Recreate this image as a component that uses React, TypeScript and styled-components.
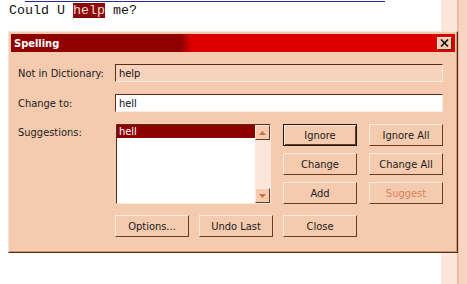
import styled, { createGlobalStyle } from "styled-components";

const GlobalStyle = createGlobalStyle`
  html, body {
    margin: 0;
    padding: 0;
    background: #fff;
  }
`;

const uiFont = `"DejaVu Sans Condensed", "Liberation Sans", sans-serif`;

const Page = styled.div`
  width: 467px;
  height: 284px;
  overflow: hidden;
  padding-top: 1px;
  box-sizing: border-box;
  background: linear-gradient(
    to right,
    #fff 0,
    #fff 441px,
    #fce6db 441px,
    #fce6db 457px,
    #e8bca4 457px,
    #e8bca4 459px,
    #f8d3bf 459px
  );
`;

const DocRule = styled.div`
  margin-left: 25px;
  width: 360px;
  height: 1px;
  background: #2a2aa8;
`;

const DocText = styled.div`
  margin: 2px 0 0 9px;
  font-family: "Liberation Mono", monospace;
  font-size: 13.33px;
  line-height: 14px;
  color: #111;
`;

const Marked = styled.span`
  background: #8c0a0a;
  color: #f4dcd0;
`;

const Dialog = styled.div`
  margin: 13px 0 0 8px;
  width: 450px;
  height: 222px;
  box-sizing: border-box;
  background: #f5cbb0;
  border: 1px solid;
  border-color: #fbe2d3 #5a2c14 #5a2c14 #fbe2d3;
  box-shadow: inset -1px -1px 0 #c99478;
  padding: 2px;
  font-family: ${uiFont};
  font-size: 11px;
  color: #1a1a1a;
`;

const TitleBar = styled.div`
  height: 18px;
  display: flex;
  align-items: center;
  justify-content: space-between;
  padding: 0 3px 0 3px;
  background: linear-gradient(to right, #900000 0, #900000 170px, #dc0000 180px, #dc0000 100%);
`;

const Title = styled.span`
  color: #fff;
  font-weight: bold;
  font-size: 11px;
`;

const CloseBox = styled.div`
  width: 15px;
  height: 13px;
  display: flex;
  align-items: center;
  justify-content: center;
  background: #f5cbb0;
  border: 1px solid;
  border-color: #fde9dd #5a2c14 #5a2c14 #fde9dd;
  box-sizing: border-box;
`;

const Body = styled.div`
  display: grid;
  grid-template-columns: 97px 328px;
  row-gap: 12px;
  padding: 12px 0 0 7px;
  align-items: center;
`;

const Label = styled.div<{ $top?: boolean }>`
  align-self: ${(p) => (p.$top ? "start" : "center")};
  padding-top: ${(p) => (p.$top ? "2px" : "0")};
`;

const Field = styled.div<{ $readOnly?: boolean }>`
  height: 18px;
  box-sizing: border-box;
  display: flex;
  align-items: center;
  padding-left: 3px;
  background: ${(p) => (p.$readOnly ? "#f7d3be" : "#fff")};
  border: 1px solid;
  border-color: #5a2c14 #fde9dd #fde9dd #5a2c14;
  color: #111;
`;

const Lower = styled.div`
  display: flex;
  gap: 12px;
  padding-left: 1px;
`;

const List = styled.div`
  width: 156px;
  height: 80px;
  box-sizing: border-box;
  display: flex;
  background: #fff;
  border: 1px solid;
  border-color: #5a2c14 #fde9dd #fde9dd #5a2c14;
`;

const Items = styled.div`
  flex: 1;
`;

const Item = styled.div<{ $selected?: boolean }>`
  height: 13px;
  line-height: 13px;
  padding-left: 2px;
  background: ${(p) => (p.$selected ? "#8c0000" : "transparent")};
  color: ${(p) => (p.$selected ? "#fff" : "#111")};
`;

const ScrollBar = styled.div`
  width: 15px;
  display: flex;
  flex-direction: column;
  justify-content: space-between;
  background: #fce6db;
`;

const Arrow = styled.div`
  height: 15px;
  display: flex;
  align-items: center;
  justify-content: center;
  box-sizing: border-box;
  background: #f5cbb0;
  border: 1px solid;
  border-color: #fde9dd #6a3a20 #6a3a20 #fde9dd;
`;

const ButtonGrid = styled.div`
  display: grid;
  grid-template-columns: 74px 74px;
  grid-auto-rows: 22px;
  column-gap: 12px;
  row-gap: 7px;
`;

const Button = styled.div<{ $default?: boolean; $disabled?: boolean }>`
  box-sizing: border-box;
  display: flex;
  align-items: center;
  justify-content: center;
  background: #f5cbb0;
  border: 1px solid;
  border-color: ${(p) =>
    p.$default ? "#1a1a1a" : "#fde9dd #6a3a20 #6a3a20 #fde9dd"};
  box-shadow: ${(p) =>
    p.$default
      ? "inset 1px 1px 0 #fde9dd, inset -1px -1px 0 #6a3a20"
      : "none"};
  color: ${(p) => (p.$disabled ? "#d8825a" : "#1a1a1a")};
`;

const BottomRow = styled.div`
  display: flex;
  gap: 10px;
  margin: 11px 0 0 104px;
  height: 22px;
  & > div {
    width: 74px;
  }
`;

const Triangle = ({ down }: { down?: boolean }) => (
  <svg width="7" height="4" viewBox="0 0 7 4">
    <path d={down ? "M0 0h7L3.5 4z" : "M3.5 0L7 4H0z"} fill="#c8704e" />
  </svg>
);

const App = () => {
  return (
    <Page>
      <GlobalStyle />
      <DocRule />
      <DocText>
        Could U <Marked>help</Marked> me?
      </DocText>
      <Dialog>
        <TitleBar>
          <Title>Spelling</Title>
          <CloseBox>
            <svg width="9" height="8" viewBox="0 0 9 8">
              <path d="M1 0.5l7 7M8 0.5l-7 7" stroke="#111" strokeWidth="1.6" />
            </svg>
          </CloseBox>
        </TitleBar>
        <Body>
          <Label>Not in Dictionary:</Label>
          <Field $readOnly>help</Field>
          <Label>Change to:</Label>
          <Field>hell</Field>
          <Label $top>Suggestions:</Label>
          <Lower>
            <List>
              <Items>
                <Item $selected>hell</Item>
              </Items>
              <ScrollBar>
                <Arrow>
                  <Triangle />
                </Arrow>
                <Arrow>
                  <Triangle down />
                </Arrow>
              </ScrollBar>
            </List>
            <ButtonGrid>
              <Button $default>Ignore</Button>
              <Button>Ignore All</Button>
              <Button>Change</Button>
              <Button>Change All</Button>
              <Button>Add</Button>
              <Button $disabled>Suggest</Button>
            </ButtonGrid>
          </Lower>
        </Body>
        <BottomRow>
          <Button>Options...</Button>
          <Button>Undo Last</Button>
          <Button>Close</Button>
        </BottomRow>
      </Dialog>
    </Page>
  );
};

export default App;
